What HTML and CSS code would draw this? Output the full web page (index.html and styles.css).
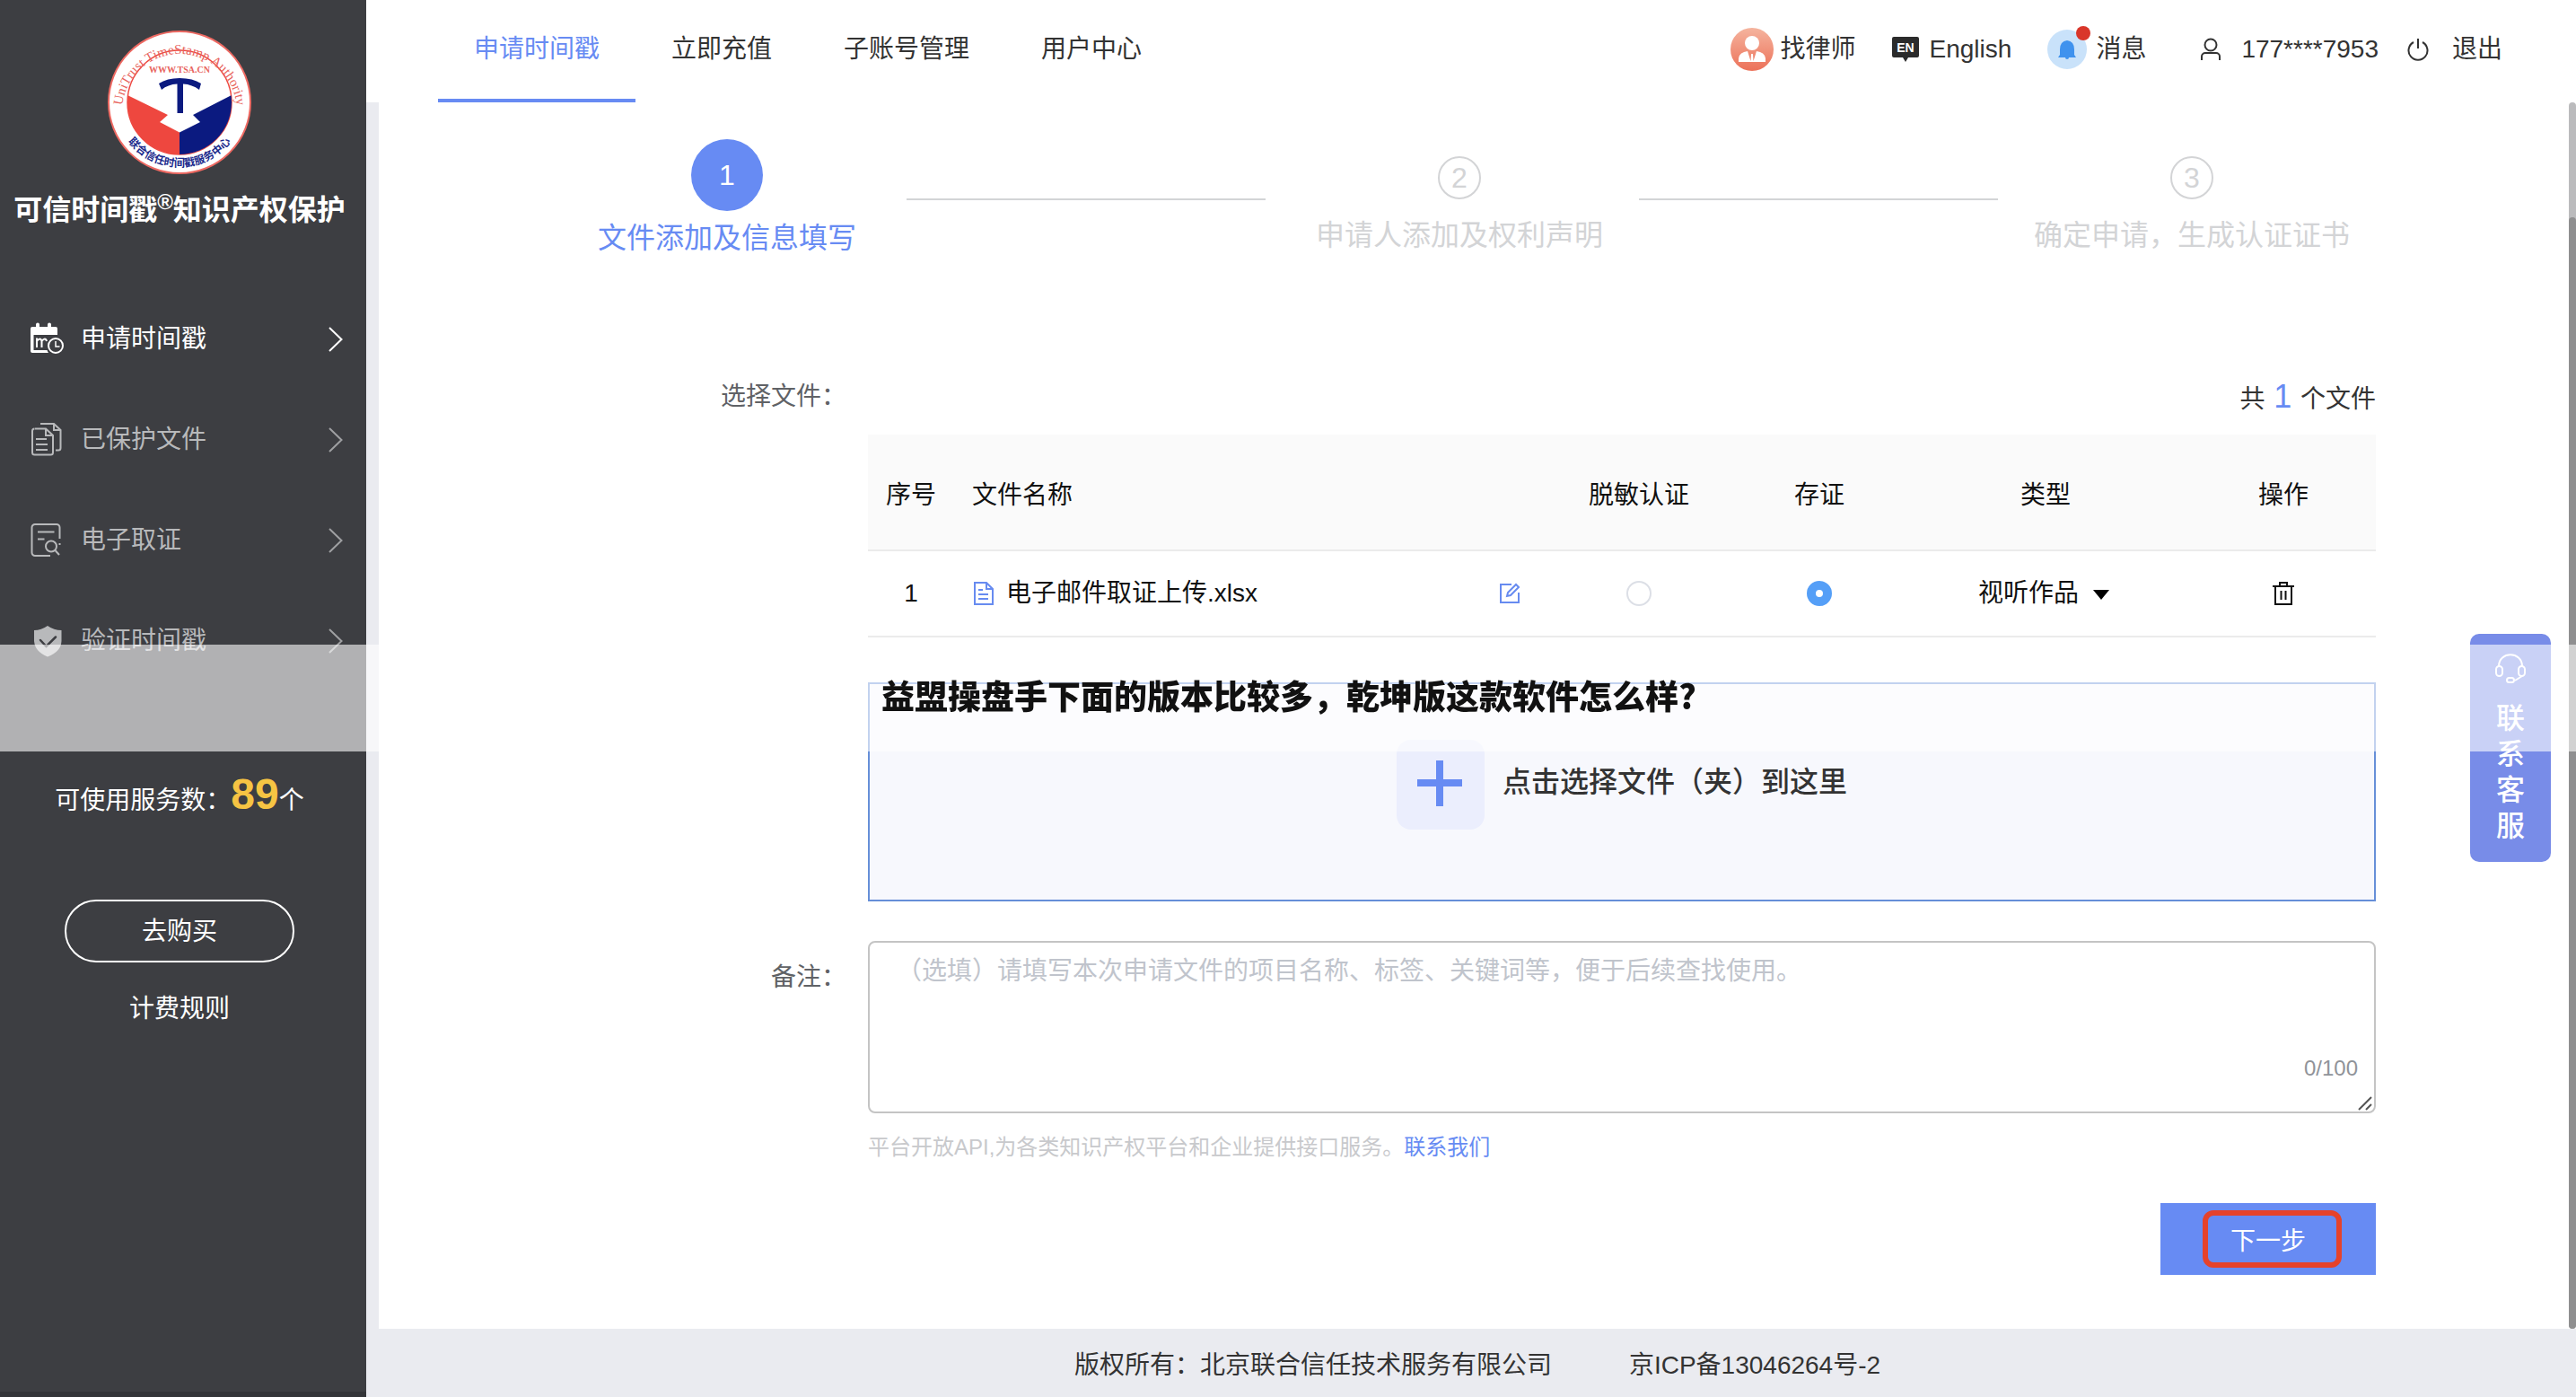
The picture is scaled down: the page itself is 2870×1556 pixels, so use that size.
FILE: index.html
```html
<!DOCTYPE html>
<html lang="zh-CN">
<head>
  <meta charset="UTF-8" />
  <meta name="viewport" content="width=device-width, initial-scale=1.0" />
  <title>可信时间戳知识产权保护</title>
  <link rel="stylesheet" href="styles.css">
</head>
<body>
  <div class="page">
    <aside class="sidebar">
      <svg class="logo" viewBox="0 0 160 160" role="img" aria-label="联合信任时间戳服务中心">
        <defs>
          <path id="arc-top" d="M16 90 A64 64 0 1 1 144 90" />
          <path id="arc-bottom" d="M8 80 A72 72 0 0 0 152 80" />
          <clipPath id="disc"><circle cx="80" cy="80" r="58" /></clipPath>
        </defs>
        <circle cx="80" cy="80" r="79" fill="#fff" stroke="#ee6a63" stroke-width="2" />
        <circle cx="80" cy="80" r="58" fill="#fff" stroke="#ee4a42" stroke-width="1.5" />
        <g clip-path="url(#disc)">
          <path d="M20 71 L67 94 L58 102 L80 113.500 V140 H20 Z" fill="#ee473f" />
          <path d="M140 71 L95 94 L103 102 L80 113.500 V140 H140 Z" fill="#0b1a80" />
        </g>
        <path d="M57 59 Q66 53 80 53 Q95 53 104 59 L102 66 Q94 60 84 59.500 V92 H77.500 V59.500 Q67 60 60 66 Z" fill="#0b1a80" />
        <text class="logo-ring"><textPath href="#arc-top" startOffset="50%">UniTrust TimeStamp Authority</textPath></text>
        <text class="logo-site" x="80" y="47">WWW.TSA.CN</text>
        <text class="logo-cn"><textPath href="#arc-bottom" startOffset="50%">联合信任时间戳服务中心</textPath></text>
      </svg>
      <h1 class="brand">可信时间戳<sup>®</sup>知识产权保护</h1>

      <nav class="menu">
        <a href="#" class="menu-item active">
          <svg class="menu-icon" viewBox="0 0 40 40">
            <path fill="currentColor" fill-rule="evenodd" d="M5 6 H8 V3.500 a1.500 1.500 0 0 1 4 0 V6 H21 V3.500 a1.500 1.500 0 0 1 4 0 V6 H30 a2 2 0 0 1 2 2 V15 H5.500 V32 H20.500 a10 10 0 0 0 1.500 3 H4 a2 2 0 0 1 -2 -2 V8 a2 2 0 0 1 2 -2 Z" />
            <path d="M9 29 V18.500 M9 22 q4 -5 5.500 0 V29 M14.500 22 q4 -5 5.500 0" fill="none" stroke="currentColor" stroke-width="2" />
            <circle cx="30" cy="27" r="8" fill="none" stroke="currentColor" stroke-width="2" />
            <path d="M30 22 V28 H34.500" fill="none" stroke="currentColor" stroke-width="1.500" />
          </svg>
          <span>申请时间戳</span>
          <svg class="menu-arrow" viewBox="0 0 16 28"><path d="M1 1 L14.500 14 L1 27" /></svg>
        </a>
        <a href="#" class="menu-item">
          <svg class="menu-icon line" viewBox="0 0 40 40">
            <path d="M7 7.500 H19 L27 15 V34 a2.500 2.500 0 0 1 -2.500 2.500 H6.500 A2.500 2.500 0 0 1 4 34 V10 a2.500 2.500 0 0 1 2.500 -2.500 M19 8 V15 H26" />
            <path d="M13 2 H28 L35.500 9 V29 a2.500 2.500 0 0 1 -2.500 2.500 H30 M28 2 V9 H35 M8 19 H20 M8 25 H21 M8 31 H21" />
          </svg>
          <span>已保护文件</span>
          <svg class="menu-arrow" viewBox="0 0 16 28"><path d="M1 1 L14.500 14 L1 27" /></svg>
        </a>
        <a href="#" class="menu-item">
          <svg class="menu-icon line" viewBox="0 0 40 40">
            <path d="M24 37 H7 a3.500 3.500 0 0 1 -3.500 -3.500 V5.500 A3.500 3.500 0 0 1 7 2 H31 a3.500 3.500 0 0 1 3.500 3.500 V18 M34.500 23 V25 M10 10.500 H28.500 M10 18.500 H17.500" />
            <circle cx="25" cy="26.500" r="6" />
            <path d="M29.500 31 L34 36" />
          </svg>
          <span>电子取证</span>
          <svg class="menu-arrow" viewBox="0 0 16 28"><path d="M1 1 L14.500 14 L1 27" /></svg>
        </a>
        <a href="#" class="menu-item">
          <svg class="menu-icon" viewBox="0 0 40 40">
            <path fill="currentColor" d="M21 3 Q28 8 36.500 8 V20 Q36 32 21 37.500 Q7 32 6 20 V8 Q14 8 21 3 Z" />
            <path d="M13 19 L19.500 26 L30 15.500" fill="none" stroke="#3d3e42" stroke-width="2.500" stroke-linecap="round" />
          </svg>
          <span>验证时间戳</span>
          <svg class="menu-arrow" viewBox="0 0 16 28"><path d="M1 1 L14.500 14 L1 27" /></svg>
        </a>
      </nav>

      <p class="quota">可使用服务数：<strong>89</strong>个</p>
      <a href="#" class="buy">去购买</a>
      <a href="#" class="rules">计费规则</a>
    </aside>

    <div class="main">
      <header class="topbar">
        <nav class="tabs">
          <a href="#" class="active">申请时间戳</a>
          <a href="#">立即充值</a>
          <a href="#">子账号管理</a>
          <a href="#">用户中心</a>
        </nav>
        <div class="tools">
          <a href="#" class="lawyer">
            <svg width="48" height="48" viewBox="0 0 48 48">
              <defs><linearGradient id="peach" x1="0" y1="0" x2="0" y2="1"><stop offset="0" stop-color="#f5b49e" /><stop offset="1" stop-color="#ec7159" /></linearGradient></defs>
              <circle cx="24" cy="24" r="24" fill="url(#peach)" />
              <circle cx="24" cy="17" r="8" fill="#fff" />
              <path d="M9 38 V34 Q10 27 19 26 L22.500 37 L23 29 H25 L25.500 37 L29 26 Q38 27 39 34 V38 Z" fill="#fff" />
            </svg>
            找律师
          </a>
          <a href="#" class="language">
            <svg width="30" height="28" viewBox="0 0 30 28">
              <path d="M2 0 H28 a2 2 0 0 1 2 2 V21 a2 2 0 0 1 -2 2 H18 L15 28 L12 23 H2 a2 2 0 0 1 -2 -2 V2 a2 2 0 0 1 2 -2 Z" fill="#2b2b2b" />
              <text class="language-mark" x="15" y="17">EN</text>
            </svg>
            English
          </a>
          <a href="#" class="message">
            <span class="bell">
              <svg width="44" height="44" viewBox="0 0 44 44">
                <circle cx="22" cy="22" r="22" fill="#c9e2fa" />
                <path d="M22 12 Q30 13 30 22 V28 L32 31 H12 L14 28 V22 Q14 13 22 12 Z M20 31 H24 a2 2 0 0 1 -4 0" fill="#3f92ee" />
              </svg>
              <i class="dot"></i>
            </span>
            消息
          </a>
          <a href="#" class="account">
            <svg width="24" height="26" viewBox="0 0 24 26" fill="none" stroke="#333" stroke-width="2">
              <circle cx="12" cy="8" r="6.500" /><path d="M2 25 V21 a4 4 0 0 1 4 -4 H18 a4 4 0 0 1 4 4 V25" />
            </svg>
            177****7953
          </a>
          <a href="#" class="logout">
            <svg width="24" height="26" viewBox="0 0 24 26" fill="none" stroke="#333" stroke-width="2">
              <path d="M12 1 V12 M7 5 a10.500 10.500 0 1 0 10 0" />
            </svg>
            退出
          </a>
        </div>
      </header>

      <main class="content">
        <ol class="steps">
          <li class="step active"><b>1</b><span>文件添加及信息填写</span></li>
          <li class="step-line"></li>
          <li class="step"><b>2</b><span>申请人添加及权利声明</span></li>
          <li class="step-line"></li>
          <li class="step"><b>3</b><span>确定申请，生成认证证书</span></li>
        </ol>

        <form class="form">
          <div class="field-label files-label">选择文件：</div>
          <div class="field">
            <p class="count">共 <em>1</em> 个文件</p>
            <table class="files">
              <colgroup>
                <col class="col-no" /><col class="col-name" /><col class="col-mask" /><col class="col-keep" /><col class="col-type" /><col class="col-action" />
              </colgroup>
              <thead>
                <tr>
                  <th>序号</th>
                  <th class="name">文件名称</th>
                  <th>脱敏认证</th>
                  <th>存证</th>
                  <th>类型</th>
                  <th>操作</th>
                </tr>
              </thead>
              <tbody>
                <tr>
                  <td>1</td>
                  <td class="name">
                    <div class="file">
                      <svg width="24" height="26" viewBox="0 0 24 26" fill="none" stroke="#678bf0" stroke-width="2">
                        <path d="M3 1 H16 L23 8 V25 H3 Z M16 1 V8 H23 M7 9 H12 M7 14 H18 M7 19 H18" />
                      </svg>
                      <span>电子邮件取证上传.xlsx</span>
                      <button type="button" class="icon-button" aria-label="编辑">
                        <svg width="24" height="24" viewBox="0 0 24 24" fill="none" stroke="#678bf0" stroke-width="2">
                          <path d="M13 2 H1 V22 H21 V11 M8 15 L9 11 L18 2 L21 5 L12 14 Z" />
                        </svg>
                      </button>
                    </div>
                  </td>
                  <td><input type="radio" name="mode" aria-label="脱敏认证" /></td>
                  <td><input type="radio" name="mode" aria-label="存证" checked /></td>
                  <td>
                    <div class="type">
                      <select aria-label="类型"><option>视听作品</option></select>
                      <svg width="18" height="12" viewBox="0 0 18 12"><path d="M0 1 H18 L9 12 Z" /></svg>
                    </div>
                  </td>
                  <td>
                    <button type="button" class="icon-button" aria-label="删除">
                      <svg width="24" height="26" viewBox="0 0 24 26" fill="none" stroke="#111" stroke-width="2">
                        <path d="M0 5 H24 M8 5 V1 H16 V5 M3 5 V25 H21 V5 M9.500 10 V20 M14.500 10 V20" />
                      </svg>
                    </button>
                  </td>
                </tr>
              </tbody>
            </table>
            <button type="button" class="upload">
              <svg width="98" height="100" viewBox="0 0 98 100">
                <rect width="98" height="100" rx="16" fill="#ebeefd" />
                <path d="M23 48 H73 M48 23 V74" stroke="#678bf3" stroke-width="8" />
              </svg>
              <span>点击选择文件（夹）到这里</span>
            </button>
          </div>

          <label class="field-label remark-label" for="remark">备注：</label>
          <div class="field">
            <div class="remark">
              <textarea id="remark" placeholder="（选填）请填写本次申请文件的项目名称、标签、关键词等，便于后续查找使用。"></textarea>
              <span class="remark-count">0/100</span>
              <svg class="grip" width="16" height="16" viewBox="0 0 16 16"><path d="M1 15 L15 1 M9 15 L15 9" stroke="#555" stroke-width="2" /></svg>
            </div>
            <p class="hint">平台开放API,为各类知识产权平台和企业提供接口服务。<a href="#">联系我们</a></p>
            <div class="actions">
              <button type="submit" class="next">下一步<i class="marker"></i></button>
            </div>
          </div>
        </form>
      </main>

      <footer class="footer">
        <span>版权所有：北京联合信任技术服务有限公司</span>
        <span>京ICP备13046264号-2</span>
      </footer>
    </div>
  </div>

  <a href="#" class="service">
    <svg width="34" height="34" viewBox="0 0 34 34" fill="none" stroke="#fff" stroke-width="2">
      <path d="M4 14 C4 -3 30 -3 30 14 M30 25 L22 30" />
      <rect x="1" y="14" width="7" height="11" rx="3.500" /><rect x="26" y="14" width="7" height="11" rx="3.500" /><rect x="13" y="27" width="8" height="5" rx="2.500" />
    </svg>
    <span>联<br>系<br>客<br>服</span>
  </a>
  <div class="scrollbar"><div class="thumb"></div></div>
  <div class="banner">益盟操盘手下面的版本比较多，乾坤版这款软件怎么样?</div>
</body>
</html>
```
FILE: styles.css
```css
:root {
  --blue: #678bf3;
  --dark: #3d3e42;
  --grey: #eaebf0;
  --muted: #d3d4d6;
}

* {
  margin: 0;
  padding: 0;
  box-sizing: border-box;
}

body {
  font-family: "Liberation Sans", "Noto Sans CJK SC", sans-serif;
  font-size: 28px;
  line-height: 40px;
  color: #333;
  background: #fff;
}

a {
  color: inherit;
  text-decoration: none;
}

button, select, textarea {
  font: inherit;
  color: inherit;
  border: none;
  background: none;
}

svg {
  display: block;
  flex: none;
}

.page {
  display: flex;
  min-height: 100vh;
}

/* sidebar */
.sidebar {
  flex: 0 0 408px;
  display: flex;
  flex-direction: column;
  align-items: center;
  padding: 34px 8px 0 0;
  background: var(--dark);
  border-bottom: 6px solid #333438;
  color: #fff;
}

.logo {
  width: 160px;
  height: 160px;
}

.logo-ring,
.logo-site {
  font-family: "Liberation Serif", serif;
  text-anchor: middle;
  fill: #e8635c;
}

.logo-ring {
  font-size: 15px;
}

.logo-site {
  font-size: 10px;
  font-weight: bold;
}

.logo-cn {
  font-size: 12px;
  font-weight: bold;
  text-anchor: middle;
  fill: #1b2a8c;
}

.brand {
  margin-top: 20px;
  font-size: 32px;
  line-height: 40px;
  white-space: nowrap;
}

.brand sup {
  font-size: 24px;
  line-height: 0;
  vertical-align: 12px;
}

.menu {
  align-self: stretch;
  margin-top: 68px;
}

.menu-item {
  display: flex;
  align-items: center;
  height: 112px;
  padding: 0 18px 0 32px;
  color: #b8b9bb;
}

.menu-item.active {
  color: #fff;
}

.menu-item span {
  flex: 1;
  margin-left: 18px;
}

.menu-icon {
  width: 40px;
  height: 40px;
}

.menu-icon.line {
  fill: none;
  stroke: currentColor;
  stroke-width: 2;
}

.menu-arrow {
  width: 16px;
  height: 28px;
  fill: none;
  stroke: currentColor;
  stroke-width: 2;
  opacity: 0.8;
}

.menu-item.active .menu-arrow {
  opacity: 1;
}

.quota {
  height: 60px;
  margin-top: 92px;
  line-height: 60px;
}

.quota strong {
  font-size: 48px;
  line-height: 0;
  color: #f6c443;
}

.buy {
  width: 256px;
  height: 70px;
  margin-top: 80px;
  border: 2px solid #fff;
  border-radius: 35px;
  line-height: 68px;
  text-align: center;
}

.rules {
  margin-top: 32px;
}

/* top bar */
.main {
  flex: 1;
  display: flex;
  flex-direction: column;
  min-width: 0;
  background: var(--grey);
}

.topbar {
  display: flex;
  justify-content: space-between;
  height: 114px;
  padding: 0 82px 0 80px;
  background: #fff;
}

.tabs {
  display: flex;
}

.tabs a {
  padding: 0 40px;
  line-height: 110px;
  border-bottom: 4px solid transparent;
}

.tabs a.active {
  color: var(--blue);
  border-color: var(--blue);
}

.tools {
  display: flex;
  align-items: center;
  height: 110px;
}

.tools a {
  display: flex;
  align-items: center;
  white-space: nowrap;
}

.lawyer {
  gap: 8px;
}

.language {
  gap: 12px;
  margin-left: 40px;
}

.language-mark {
  font-size: 14px;
  font-weight: bold;
  text-anchor: middle;
  fill: #fff;
}

.message {
  gap: 10px;
  margin-left: 40px;
}

.bell {
  position: relative;
}

.dot {
  position: absolute;
  top: -4px;
  right: -4px;
  width: 16px;
  height: 16px;
  border-radius: 50%;
  background: #d9362a;
}

.account {
  gap: 22px;
  margin-left: 60px;
}

.logout {
  gap: 26px;
  margin-left: 32px;
}

/* steps */
.content {
  flex: 1;
  margin-left: 14px;
  padding-bottom: 60px;
  background: #fff;
}

.steps {
  display: flex;
  height: 170px;
  padding: 0 228px 0 188px;
  list-style: none;
}

.step {
  flex: 1 1 0;
  display: flex;
  flex-direction: column;
  align-items: center;
  gap: 20px;
  padding-top: 60px;
  font-size: 32px;
  color: var(--muted);
  white-space: nowrap;
}

.step b {
  width: 48px;
  border: 2px solid var(--muted);
  border-radius: 50%;
  font-weight: normal;
  line-height: 44px;
  text-align: center;
}

.step.active {
  gap: 10px;
  padding-top: 41px;
  color: var(--blue);
}

.step.active b {
  width: 80px;
  border: none;
  line-height: 80px;
  color: #fff;
  background: var(--blue);
}

.step-line {
  flex: 1 1 0;
  height: 2px;
  margin: 107px 16px 0 0;
  background: var(--muted);
}

/* form */
.form {
  display: grid;
  grid-template-columns: 521px 1fr;
  column-gap: 24px;
  row-gap: 44px;
  padding: 116px 223px 0 0;
}

.field {
  min-width: 0;
}

.field-label {
  text-align: right;
  color: #606266;
}

.files-label {
  line-height: 84px;
}

.remark-label {
  line-height: 82px;
}

.count {
  height: 84px;
  line-height: 90px;
  text-align: right;
}

.count em {
  margin: 0 2px;
  font-size: 36px;
  font-style: normal;
  line-height: 0;
  color: var(--blue);
}

.files {
  width: 100%;
  table-layout: fixed;
  border-collapse: separate;
  border-spacing: 0;
  color: #111;
}

.files th,
.files td {
  height: 96px;
  border-bottom: 2px solid #ebebeb;
  font-weight: normal;
  text-align: center;
  vertical-align: middle;
}

.files th,
.files th.name {
  height: 130px;
  padding-top: 8px;
  background: #fafafa;
}

.files .name {
  padding: 0 20px;
  text-align: left;
}

.col-no { width: 96px; }
.col-mask { width: 222px; }
.col-keep { width: 180px; }
.col-type { width: 324px; }
.col-action { width: 206px; }

.file {
  display: flex;
  align-items: center;
  gap: 14px;
}

.file span {
  flex: 1;
}

.icon-button {
  display: block;
  margin: 0 auto;
  cursor: pointer;
}

.files input {
  appearance: none;
  display: block;
  width: 28px;
  height: 28px;
  margin: 0 auto;
  border: 2px solid #dcdfe6;
  border-radius: 50%;
  background: #fff;
}

.files input:checked {
  border: 10px solid #559ff7;
}

.type {
  position: relative;
  width: 150px;
  margin: 0 auto;
}

.type select {
  appearance: none;
  display: block;
  width: 100%;
  height: 40px;
}

.type svg {
  position: absolute;
  top: 15px;
  right: 4px;
  pointer-events: none;
}

.upload {
  display: flex;
  align-items: center;
  justify-content: center;
  gap: 20px;
  width: 100%;
  height: 244px;
  margin-top: 50px;
  padding-bottom: 16px;
  border: 2px solid #668fd8;
  background: #f7f8fd;
  font-size: 32px;
  font-weight: 500;
  cursor: pointer;
}

.upload span {
  padding-bottom: 6px;
}

.remark {
  position: relative;
}

.remark textarea {
  display: block;
  width: 100%;
  height: 192px;
  padding: 12px 30px;
  border: 2px solid #c4c4c4;
  border-radius: 8px;
  resize: none;
}

.remark textarea::placeholder {
  color: #c0c4cc;
}

.remark-count {
  position: absolute;
  right: 20px;
  bottom: 30px;
  font-size: 24px;
  color: #909399;
}

.grip {
  position: absolute;
  right: 4px;
  bottom: 3px;
}

.hint {
  margin-top: 20px;
  font-size: 24px;
  line-height: 36px;
  color: #c8c9cc;
}

.hint a {
  color: var(--blue);
}

.actions {
  display: flex;
  justify-content: flex-end;
  margin-top: 44px;
}

.next {
  position: relative;
  width: 240px;
  height: 80px;
  padding-top: 6px;
  color: #fff;
  background: var(--blue);
}

/* highlight frame round the button text */
.marker {
  position: absolute;
  inset: 8px 38px 8px 47px;
  border: 6px solid #e5422b;
  border-radius: 12px;
}

.footer {
  display: flex;
  justify-content: center;
  gap: 86px;
  height: 76px;
  padding-left: 14px;
  line-height: 82px;
}

/* floating parts */
.service {
  position: fixed;
  top: 706px;
  right: 28px;
  display: flex;
  flex-direction: column;
  align-items: center;
  gap: 18px;
  width: 90px;
  height: 254px;
  padding-top: 22px;
  border-radius: 10px;
  background: #788ce8;
  font-size: 32px;
  font-weight: 500;
  color: #fff;
}

.scrollbar {
  position: fixed;
  top: 114px;
  right: 0;
  bottom: 76px;
  width: 8px;
  padding-top: 128px;
  border-radius: 4px;
  background: #bbbbbd;
}

.thumb {
  height: 100%;
  border-radius: 4px;
  background: #8f8f90;
}

.banner {
  position: fixed;
  top: 718px;
  left: 0;
  right: 0;
  height: 119px;
  padding-left: 982px;
  font-family: "Noto Sans CJK SC", sans-serif;
  font-size: 37px;
  font-weight: 900;
  line-height: 112px;
  color: #111;
  background: rgba(255, 255, 255, 0.6);
}
```
